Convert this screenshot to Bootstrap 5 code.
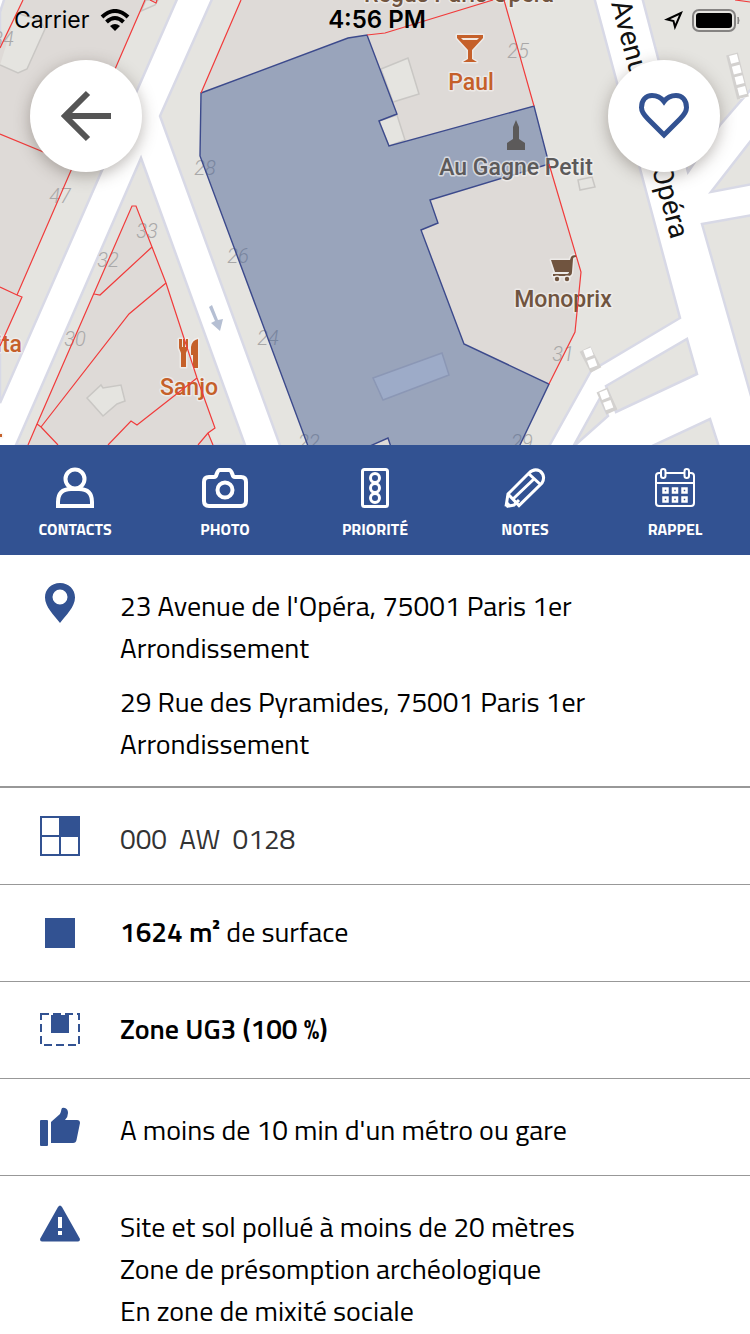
<!DOCTYPE html>
<html lang="fr">
<head>
<meta charset="utf-8">
<meta name="viewport" content="width=device-width, initial-scale=1">
<title>Parcelle 000 AW 0128</title>
<link href="https://cdn.jsdelivr.net/npm/bootstrap@5.3.0/dist/css/bootstrap.min.css" rel="stylesheet">
<style>
  :root { --brand: #325292; }
  body { font-family: "Titillium Web", Roboto, sans-serif; color: #000; background: #fff; }
  .map-svg { display: block; width: 100%; height: auto; background: #fff; }
  .ground { fill: #e5e4e0; stroke: #d8d9e6; stroke-width: 2.5; }
  .built { fill: #dedad7; }
  .yard { fill: #e5e4e0; stroke: #c9c7c4; stroke-width: 1.5; }
  .plot { fill: none; stroke: #f13b3b; stroke-width: 1.2; }
  .parcel { fill: rgba(50, 82, 146, .4); stroke: #3c4a8c; stroke-width: 1.4; }
  .cross-edge { stroke: #d3d1cf; stroke-width: 12; }
  .cross-step { stroke: #fff; stroke-width: 8; stroke-dasharray: 8 3; }
  .house-no { font: italic 300 20px Roboto, sans-serif; fill: #a9a8a8; text-anchor: middle; }
  .poi { font: 500 23px Roboto, sans-serif; text-anchor: middle; stroke: rgba(243, 241, 239, .7); stroke-width: 3px; stroke-linejoin: round; paint-order: stroke; }
  .street { font: 400 28px Roboto, sans-serif; fill: #111; }
  .food { fill: #c5602a; }
  .shop { fill: #70543f; }
  .sight { fill: #5c5a5a; }
  .status-bar { height: 40px; padding: 0 10px 0 14px; font: 400 23px/40px Inter, sans-serif; }
  .status-bar .clock { font-size: 24px; font-weight: 600; }
  .network { gap: 11px; }
  .round-btn { width: 112px; height: 112px; top: 60px; background: #fff; border: 0; box-shadow: 0 4px 16px rgba(60, 50, 40, .35); }
  .back-btn { left: 30px; }
  .fav-btn { right: 30px; }
  .tool-bar { background: var(--brand); height: 110px; }
  .tool-bar button { background: none; border: 0; padding: 20px 0 0; color: #fff; font-size: 16px; line-height: 24px; font-weight: 700; }
  .tool-bar svg { width: 48px; height: 44px; margin-bottom: 8px; fill: none; stroke: #fff; stroke-width: 4; }
  .facts > li { display: flex; gap: 40px; min-height: 97px; padding: 26px 40px 21px; border: 0; border-bottom: 1px solid #989898; color: inherit; font-size: 28px; line-height: 42px; }
  .facts > li:first-child { border-bottom-width: 2px; }
  .facts > li:last-child { border-bottom: 0; padding-bottom: 0; }
  .facts svg { width: 40px; height: 40px; flex: none; margin-top: 2px; fill: var(--brand); }
  .facts p { margin: 0 0 12px; }
  .facts p:last-child { margin-bottom: 0; }
  .low { padding-top: 4px; }
  .cadastre { color: #333; }
  .facts b { font-weight: 600; }
</style>
</head>
<body>
<header class="position-relative overflow-hidden">
  <svg class="map-svg" viewBox="0 0 750 445" role="img" aria-label="Plan du quartier de l'Opéra">
    <g class="ground">
      <path d="M5-3H178L0 403V12Z"/>
      <path d="M141 158 16 445H245Z"/>
      <path d="M213-3 160 116 281 448H548L591 371 680 318 594-3Z"/>
      <path d="M642-3H753V87L720 125 688 172Z"/>
      <path d="M711 192 753 138V184Z"/>
      <path d="M702 224 753 215V403Z"/>
      <path d="M606 386 687 339 697 374 616 412Z"/>
      <path d="M600 398 608 416 573 447Z"/>
      <path d="M650 447 710 419 719 447Z"/>
    </g>
    <g class="built">
      <path d="M23 0H145L71 171 17 295 22 297 0 346V48Z"/>
      <path d="M132 206H136L152 247 166 283 197 378 215 428 208 433 213 445H28L37 424Z"/>
      <path d="M241 0H504L534 106 549 164 581 272 575 332 549 384 520 445H308L200 156 201 93Z"/>
      <path d="M735 0H750V2Z"/>
    </g>
    <g class="yard">
      <path d="M0 65 18 73 27 69 45 29 40 20 16 13"/>
      <path d="M141 11 155 5 158 0H146Z"/>
      <path d="M101 385 103 388 121 385 125 401 117 404 103 416 87 398Z"/>
      <path d="M381 69 408 58 419 94 393 102Z"/>
      <path d="M379 121 397 115 405 140 389 146Z"/>
      <path d="M578 180 592 177 595 187 580 190Z"/>
    </g>
    <path class="cross-edge" d="M732 54 743 98M585 349 596 370M602 390 612 412"/>
    <path class="cross-step" d="M733 55 744 98M587 349 594 368M603 391 610 410"/>
    <g class="house-no">
      <text x="3" y="46">34</text><text x="60" y="203">47</text><text x="205" y="175">28</text>
      <text x="147" y="238">33</text><text x="108" y="267">32</text><text x="75" y="346">30</text>
      <text x="238" y="263">26</text><text x="268" y="345">24</text><text x="309" y="449">22</text>
      <text x="518" y="58">25</text><text x="563" y="361">31</text><text x="522" y="449">29</text>
    </g>
    <path class="parcel" d="M201 93 348 38 367 35 397 114 379 121 389 146 534 106 549 164 430 200 438 223 421 230 464 344 549 384 519 447H391L388 438 370 446H308L200 156Z"/>
    <path d="M373 378 442 353 449 375 383 400Z" fill="#9dabc8" stroke="#8b97b5" stroke-width="1.5"/>
    <text class="street" transform="translate(611 3) rotate(75)">Avenue</text>
    <text class="street" transform="translate(671 240) rotate(75)" text-anchor="end">Opéra</text>
    <g class="poi">
      <g class="food">
        <path d="M457 35H483V38L472 50V59L477 62H463L468 59V50L457 38Z"/>
        <path d="M461 38H479L477 40H463Z" fill="#f3e7df" stroke="none"/>
        <text x="471" y="90">Paul</text>
        <path d="M179 339H182V347H183V339H185V347H186V339H188V348L186 353V367H181V353L179 348ZM198 339V368H193V355H191V347Q192 340 198 339Z"/>
        <text x="189" y="395">Sanjo</text>
        <text x="9" y="352">ita</text>
        <path d="M0 434H2V437H0Z"/>
      </g>
      <g class="shop">
        <text x="459" y="2">Regus Paris Opéra</text>
        <path d="M551 260H570L571 257Q572 255 576 255V257Q573 257 573 259L572 272Q572 276 568 276H553V274H566Q569 274 569 272H555Z"/>
        <circle cx="557" cy="279" r="2.2"/><circle cx="567" cy="279" r="2.2"/>
        <text x="563" y="307">Monoprix</text>
      </g>
      <g class="sight">
        <path d="M516 120 519 127V139L525 143V150H507V143L513 139V127Z" stroke="none"/>
        <text x="516" y="175">Au Gagne Petit</text>
      </g>
    </g>
    <path d="M209 307 212 305 218 320 223 319 220 331 211 323 215 321Z" fill="#b5bfd3"/>
    <g class="plot">
      <path d="M23 0 0 48M0 134 75 165M145 0 17 295 0 287M17 295 22 297 0 346M150 0 156 3 157 0"/>
      <path d="M28 445 37 424 132 206H136L152 247 166 283 197 378 215 428 208 433 198 445M208 433 213 445"/>
      <path d="M152 247 100 295 94 294M166 283 129 314 41 427 37 424M41 427 58 445M197 378 137 425 131 421 108 445"/>
      <path d="M241 0 201 93M367 35 385 33 493 0M504 0 534 106M549 164 581 272 575 332 549 384M735 0 750 2"/>
    </g>
  </svg>

  <div class="status-bar position-absolute top-0 start-0 w-100 d-flex align-items-center">
    <div class="network col d-flex align-items-center">
      <span>Carrier</span>
      <svg width="30" height="22" viewBox="0 0 30 22" fill="none" stroke="#000" stroke-width="4" aria-label="Wi-Fi">
        <path d="M2 8Q15-4 28 8M6.500 13Q15 5 23.500 13"/>
        <path d="M10 17Q15 13 20 17L15 22Z" fill="#000" stroke="none"/>
      </svg>
    </div>
    <div class="clock">4:56 PM</div>
    <div class="col d-flex align-items-center justify-content-end gap-2">
      <svg width="20" height="20" viewBox="0 0 20 20" fill="none" stroke="#000" stroke-width="2" stroke-linejoin="miter" aria-label="Localisation"><path d="M17 3 3 9.500 9.500 11 11 17Z"/></svg>
      <svg width="48" height="24" viewBox="0 0 48 24" aria-label="Batterie"><rect x="1" y="2" width="42" height="21" rx="6" fill="none" stroke="#858382" stroke-width="2"/><rect x="4" y="5" width="36" height="15" rx="3"/><path d="M46 9Q48 12.500 46 16Z" fill="#858382" stroke="#858382"/></svg>
    </div>
  </div>

  <button class="round-btn back-btn rounded-circle position-absolute p-0" type="button" aria-label="Retour">
    <svg width="112" height="112" viewBox="0 0 112 112" fill="none" stroke="#555" stroke-width="6"><path d="M81 56H35M58 33 35 56 58 79"/></svg>
  </button>
  <button class="round-btn fav-btn rounded-circle position-absolute p-0" type="button" aria-label="Ajouter aux favoris">
    <svg width="112" height="112" viewBox="0 0 112 112" fill="none" stroke="#325292" stroke-width="5"><path d="M56 75 40 59C36 55 33.500 52 33.500 47.500 33.500 40 38 35.500 44 35.500 49 35.500 53 37.500 56 41.500 59 37.500 63 35.500 68 35.500 74 35.500 78.500 40 78.500 47.500 78.500 52 76 55 72 59Z"/></svg>
  </button>
</header>

<nav class="tool-bar d-flex" aria-label="Actions">
  <button class="col d-flex flex-column align-items-center" type="button">
    <svg viewBox="0 0 48 44"><circle cx="24" cy="14" r="9.500"/><path d="M7 41V37Q7 24 20 24H28Q41 24 41 37V41Z"/></svg>
    CONTACTS
  </button>
  <button class="col d-flex flex-column align-items-center" type="button">
    <svg viewBox="0 0 48 44"><path d="M8 12H13Q15 12 15.500 9.500 17 5 19 5H28Q30 5 31.500 9.500 32 12 34 12H40Q45 12 45 17V36Q45 41 40 41H8Q3 41 3 36V17Q3 12 8 12Z"/><circle cx="24" cy="25" r="7.500"/></svg>
    PHOTO
  </button>
  <button class="col d-flex flex-column align-items-center" type="button">
    <svg viewBox="0 0 48 44"><g stroke-width="3"><rect x="11.500" y="4.500" width="25" height="37" rx="2"/><circle cx="24" cy="13" r="4.500"/><circle cx="24" cy="23" r="4.500"/><circle cx="24" cy="33" r="4.500"/></g></svg>
    PRIORITÉ
  </button>
  <button class="col d-flex flex-column align-items-center" type="button">
    <svg viewBox="0 0 48 44"><g stroke-width="3"><path d="M5 41.500 7 29 28 8Q33 3 39 6 45 11 41 18L18 40.500 7 29M5.500 41.500 13 40 18 35M28 9 40 20M12 34 34 13"/><path d="M5 42 6 36 11 41Z" fill="#fff" stroke="none"/></g></svg>
    NOTES
  </button>
  <button class="col d-flex flex-column align-items-center" type="button">
    <svg viewBox="0 0 48 44"><g stroke-width="2"><path d="M10 8H8Q5 8 5 11V38Q5 41 8 41H40Q43 41 43 38V11Q43 8 40 8H38M14 8H34M5 18H43"/><rect x="10" y="4" width="4.500" height="9" rx="2.200"/><rect x="33.500" y="4" width="4.500" height="9" rx="2.200"/></g><path stroke-width="2.500" d="M12.500 23.500h4v4h-4zM22 23.500h4v4h-4zM31.500 23.500h4v4h-4zM12.500 32.500h4v4h-4zM22 32.500h4v4h-4zM31.500 32.500h4v4h-4z"/></svg>
    RAPPEL
  </button>
</nav>

<main>
  <ul class="facts list-group list-group-flush list-unstyled mb-0">
    <li>
      <svg viewBox="0 0 40 40" aria-hidden="true"><path fill-rule="evenodd" d="M20 0C11 0 5 6.500 5 14.500 5 24 14 32 20 40 26 32 35 24 35 14.500 35 6.500 29 0 20 0ZM20 6.500A7.500 7.500 0 1 1 20 21.500 7.500 7.500 0 1 1 20 6.500Z"/></svg>
      <div class="low">
        <p>23 Avenue de l'Opéra, 75001 Paris 1er<br>Arrondissement</p>
        <p>29 Rue des Pyramides, 75001 Paris 1er<br>Arrondissement</p>
      </div>
    </li>
    <li>
      <svg viewBox="0 0 40 40" aria-hidden="true"><path fill-rule="evenodd" d="M0 0H40V40H0ZM2 2V19H19V2ZM2 21V38H19V21ZM21 21V38H38V21Z"/></svg>
      <div class="low cadastre">000&nbsp; AW&nbsp; 0128</div>
    </li>
    <li>
      <svg viewBox="0 0 40 40" aria-hidden="true"><path d="M5 5H35V35H5Z"/></svg>
      <div><b>1624 m²</b> de surface</div>
    </li>
    <li>
      <svg viewBox="0 0 40 40" aria-hidden="true"><path d="M11 5H29V23H11Z"/><path d="M1 4H39V35H1Z" fill="none" stroke="#325292" stroke-width="2" stroke-dasharray="8 4"/></svg>
      <div><b>Zone UG3 (100 %)</b></div>
    </li>
    <li>
      <svg viewBox="0 0 40 40" aria-hidden="true"><path d="M1 13H7Q8 13 8 14V38Q8 39 7 39H1Q0 39 0 38V14Q0 13 1 13ZM11 36V15L20 7Q21 5 21.500 2 22 0 25 1 28 2 28 6 28 10 25 13H37Q40 13 40 16L36.500 33Q36 36 33 36Z"/></svg>
      <div class="low">A moins de 10 min d'un métro ou gare</div>
    </li>
    <li>
      <svg viewBox="0 0 40 40" aria-hidden="true"><path fill-rule="evenodd" d="M18 3Q20 0 22 3L40 35Q40 37.500 38 37.500H2Q0 37.500 0 35ZM18 13V24H22V13ZM18 27V31H22V27Z"/></svg>
      <div class="low">Site et sol pollué à moins de 20 mètres<br>Zone de présomption archéologique<br>En zone de mixité sociale</div>
    </li>
  </ul>
</main>
<script src="https://cdn.jsdelivr.net/npm/bootstrap@5.3.0/dist/js/bootstrap.bundle.min.js"></script>
</body>
</html>
